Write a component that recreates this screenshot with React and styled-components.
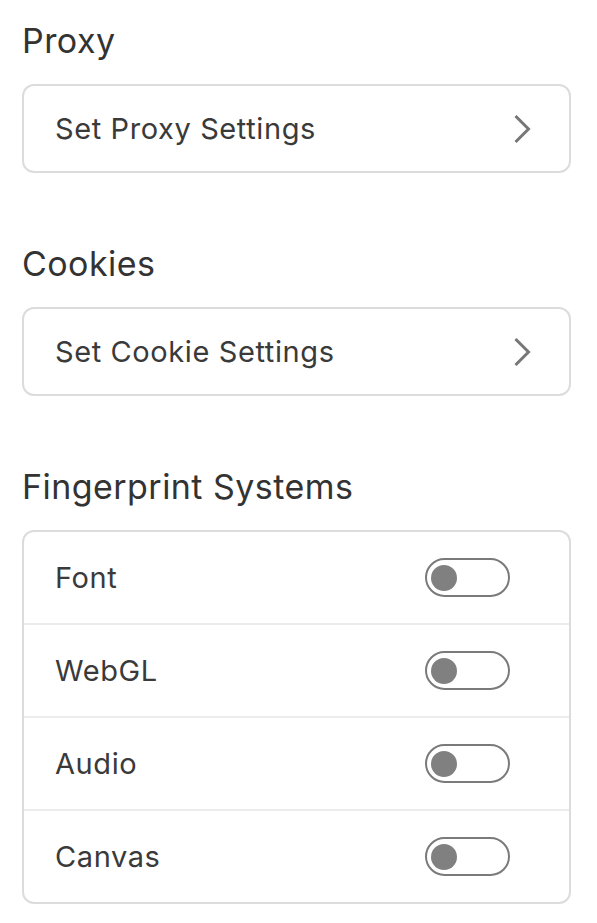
import React, { useState } from "react";
import styled, { createGlobalStyle } from "styled-components";

const GlobalStyle = createGlobalStyle`
  body {
    margin: 0;
    background: #fff;
    font-family: Inter, "Noto Sans", sans-serif;
    color: #333;
  }
`;

const Page = styled.div`
  padding: 20px 26px 0 22px;
  display: flex;
  flex-direction: column;
`;

const Section = styled.section`
  display: flex;
  flex-direction: column;
  margin-bottom: 70px;
  &:last-child {
    margin-bottom: 0;
  }
`;

const Heading = styled.h2`
  margin: 0 0 23px;
  font-size: 34px;
  font-weight: 400;
  line-height: 41px;
  letter-spacing: 0.45px;
  color: #333;
`;

const Card = styled.div`
  border: 2px solid #dcdcdc;
  border-radius: 12px;
  background: #fff;
  display: flex;
  flex-direction: column;
  overflow: hidden;
`;

const LinkRow = styled.div`
  height: 85px;
  display: flex;
  align-items: center;
  justify-content: space-between;
  padding: 0 38px 0 31px;
  font-size: 29px;
  letter-spacing: 0.6px;
  color: #3a3a3a;
  cursor: pointer;
`;

const ToggleRow = styled.div`
  height: 91px;
  display: flex;
  align-items: center;
  justify-content: space-between;
  padding: 0 59px 0 31px;
  font-size: 29px;
  letter-spacing: 0.6px;
  color: #3a3a3a;
  & + & {
    border-top: 2px solid #ececec;
  }
`;

const Track = styled.button`
  width: 85px;
  height: 39px;
  box-sizing: border-box;
  border: 2px solid #7a7a7a;
  border-radius: 20px;
  background: ${(p) => (p.$on ? "#7a7a7a" : "#fff")};
  padding: 0 4px;
  display: flex;
  align-items: center;
  justify-content: ${(p) => (p.$on ? "flex-end" : "flex-start")};
  cursor: pointer;
`;

const Knob = styled.span`
  width: 26px;
  height: 26px;
  border-radius: 50%;
  background: ${(p) => (p.$on ? "#fff" : "#808080")};
`;

const Chevron = () => (
  <svg width="18" height="30" viewBox="0 0 18 30" fill="none">
    <path d="M2.5 2 L15.5 15 L2.5 28" stroke="#777" strokeWidth="3" />
  </svg>
);

const Toggle = ({ on, onChange }) => (
  <Track type="button" $on={on} onClick={onChange}>
    <Knob $on={on} />
  </Track>
);

const fingerprints = ["Font", "WebGL", "Audio", "Canvas"];

export default function App() {
  const [enabled, setEnabled] = useState({});
  const flip = (name) => setEnabled((s) => ({ ...s, [name]: !s[name] }));

  return (
    <>
      <GlobalStyle />
      <Page>
        <Section>
          <Heading>Proxy</Heading>
          <Card>
            <LinkRow>
              Set Proxy Settings
              <Chevron />
            </LinkRow>
          </Card>
        </Section>
        <Section>
          <Heading>Cookies</Heading>
          <Card>
            <LinkRow>
              Set Cookie Settings
              <Chevron />
            </LinkRow>
          </Card>
        </Section>
        <Section>
          <Heading>Fingerprint Systems</Heading>
          <Card>
            {fingerprints.map((name) => (
              <ToggleRow key={name}>
                {name}
                <Toggle on={!!enabled[name]} onChange={() => flip(name)} />
              </ToggleRow>
            ))}
          </Card>
        </Section>
      </Page>
    </>
  );
}
